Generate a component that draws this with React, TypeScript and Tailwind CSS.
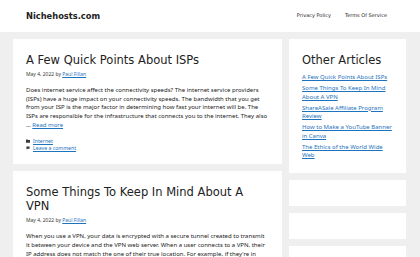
import React from "react";

const head = { fontFamily: '"DejaVu Sans", sans-serif' };
const body = { fontFamily: '"Noto Sans", sans-serif' };

function FolderIcon() {
  return (
    <svg width="4" height="4" viewBox="0 0 10 9" className="shrink-0">
      <path d="M0 1h4l1 1h5v7H0z" fill="#3a3a3a" />
    </svg>
  );
}
function CommentIcon() {
  return (
    <svg width="4" height="4" viewBox="0 0 10 10" className="shrink-0">
      <path d="M1 1h8v6H5l-3 2V7H1z" fill="#3a3a3a" />
    </svg>
  );
}

function Article({
  title,
  lines,
  footer,
}: {
  title: React.ReactNode;
  lines: string[];
  footer?: boolean;
}) {
  return (
    <div className="bg-white px-[13px] pt-[14px] pb-[12px]">
      <h2 className="text-[11.5px] leading-[14px] text-[#222]" style={head}>
        {title}
      </h2>
      <div className="mt-[4px] text-[5px] leading-[7px] text-[#3a3a3a]" style={body}>
        May 4, 2022 by <span className="text-[#1e73be] underline">Paul Fillan</span>
      </div>
      <div className="mt-[8px] text-[6px] leading-[8.7px] text-[#222]" style={body}>
        {lines.map((l, i) => (
          <div key={i} className="whitespace-nowrap">
            {l}
          </div>
        ))}
        {footer && (
          <div>
            … <span className="text-[#1e73be] underline">Read more</span>
          </div>
        )}
      </div>
      {footer && (
        <div className="mt-[8px] text-[5.2px] leading-[7.3px] text-[#1e73be]" style={body}>
          <div className="flex items-center gap-[3px]">
            <FolderIcon />
            <span className="underline">Internet</span>
          </div>
          <div className="flex items-center gap-[3px]">
            <CommentIcon />
            <span className="underline">Leave a comment</span>
          </div>
        </div>
      )}
    </div>
  );
}

export default function App() {
  const links = [
    "A Few Quick Points About ISPs",
    "Some Things To Keep In Mind About A VPN",
    "ShareASale Affiliate Program Review",
    "How to Make a YouTube Banner in Canva",
    "The Ethics of the World Wide Web",
  ];
  return (
    <div className="w-[420px] h-[257px] overflow-hidden bg-[#efefef]">
      <header className="h-[32px] bg-white flex items-center justify-between pl-[26px] pr-[33px]">
        <div className="text-[8.3px] font-bold text-[#222]" style={head}>
          Nichehosts.com
        </div>
        <nav className="flex gap-[14px] text-[5px] font-medium text-[#222]" style={head}>
          <span>Privacy Policy</span>
          <span>Terms Of Service</span>
        </nav>
      </header>
      <div className="flex gap-[7px] px-[13px] pt-[7px]">
        <div className="w-[269px] flex flex-col gap-[7px]">
          <Article
            title="A Few Quick Points About ISPs"
            footer
            lines={[
              "Does internet service affect the connectivity speeds? The internet service providers",
              "(ISPs) have a huge impact on your connectivity speeds. The bandwidth that you get",
              "from your ISP is the major factor in determining how fast your internet will be. The",
              "ISPs are responsible for the infrastructure that connects you to the internet. They also",
            ]}
          />
          <Article
            title={
              <>
                Some Things To Keep In Mind About A
                <br />
                VPN
              </>
            }
            lines={[
              "When you use a VPN, your data is encrypted with a secure tunnel created to transmit",
              "it between your device and the VPN web server. When a user connects to a VPN, their",
              "IP address does not match the one of their true location. For example, if they're in",
            ]}
          />
        </div>
        <div className="w-[117px] flex flex-col gap-[7px]">
          <div className="bg-white px-[13px] pt-[14px] pb-[13px]">
            <h2 className="text-[11.5px] leading-[14px] text-[#222]" style={head}>
              Other Articles
            </h2>
            <ul className="mt-[6px] flex flex-col gap-[3px] text-[6px] leading-[8.3px]" style={body}>
              {links.map((l) => (
                <li key={l} className="text-[#1e73be] underline">
                  {l}
                </li>
              ))}
            </ul>
          </div>
          <div className="bg-white h-[26px]" />
          <div className="bg-white h-[26px]" />
          <div className="bg-white h-[26px]" />
        </div>
      </div>
    </div>
  );
}
